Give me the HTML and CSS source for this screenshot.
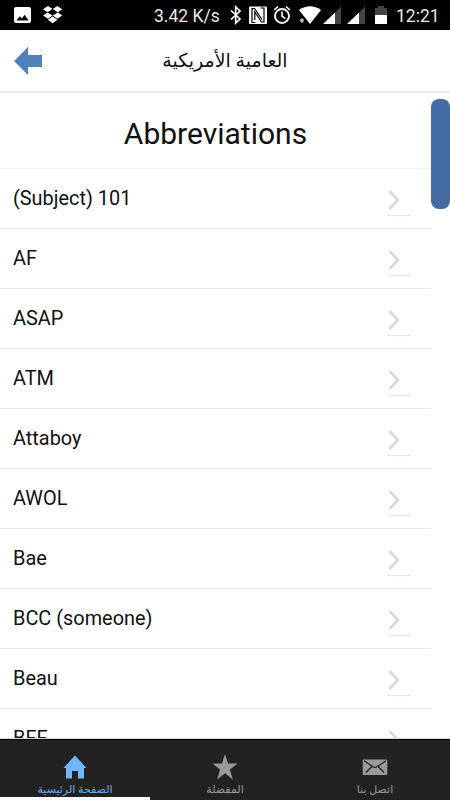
FILE: index.html
```html
<!DOCTYPE html>
<html lang="ar">
<head>
<meta charset="utf-8">
<title>العامية الأمريكية</title>
<link rel="stylesheet" href="styles.css">
</head>
<body>
<svg class="defs" width="0" height="0"><symbol id="chevron" viewBox="0 0 26 30"><path d="M2.5 3 11 12 2.5 21" fill="none" stroke="#d8d8d8" stroke-width="2.6"/><path d="M1 27.5H24" stroke="#e6e6e6" stroke-width="1.3"/></symbol></svg>
<div class="screen">
  <div class="status">
    <svg class="status-left" width="70" height="30" viewBox="0 0 70 30">
      <path fill="#fff" fill-rule="evenodd" d="M16 7H29Q31 7 31 9V21Q31 23 29 23H16Q14 23 14 21V9Q14 7 16 7ZM16.5 20.5H28.5L24.7 14.8 21.8 18.6 19.7 16.3Z"/>
      <path fill="#fff" d="M48 6 52.5 9 47.5 12.2 43 9.2ZM57.3 6 62.3 9.2 57.8 12.2 52.8 9ZM47.5 12.5 52.5 15.6 48 18.7 43 15.6ZM57.8 12.5 62.3 15.6 57.3 18.7 52.8 15.6ZM52.6 16.5 57.4 19.7 52.6 23.2 47.8 19.7Z"/>
    </svg>
    <span class="speed">3.42 K/s</span>
    <svg class="status-right" width="162" height="30" viewBox="228 0 162 30">
      <path d="M231 10.5 240 19 235.7 23V7L240 11 231 19.5" fill="none" stroke="#fff" stroke-width="1.7"/>
      <rect x="249" y="6.5" width="18" height="17.5" rx="1" fill="#fff"/>
      <path d="M255.5 22.5H252V8.5H254.5L262 19.5M260.5 8H264V22H261.5L254.8 12V20" fill="none" stroke="#000" stroke-width="1.2"/>
      <circle cx="282" cy="16" r="7" fill="none" stroke="#fff" stroke-width="1.9"/>
      <path d="M282 11.5V16.2L285.3 18.6M274 10 278 6.7M290 10 286 6.7" fill="none" stroke="#fff" stroke-width="1.6"/>
      <path d="M299 10Q310 2.5 321 10L310 24Z" fill="#fff"/>
      <path d="M302 18 304 20 303.2 22 301.8 23 300.4 21.5 300 19.5Z" fill="#bbb"/>
      <path d="M335 12.5V24H323Z" fill="#fff"/><path d="M335 12.5 341 6.5V24H335Z" fill="#444"/>
      <path d="M359 12.5V24H347Z" fill="#fff"/><path d="M359 12.5 365 6.5V24H359Z" fill="#444"/>
      <path d="M375 8H378V6H384V8H387V15H375Z" fill="#444"/><path d="M375 15H387V24H375Z" fill="#fff"/>
    </svg>
    <span class="clock">12:21</span>
  </div>
  <header class="bar">
    <svg class="back" width="28" height="28" viewBox="0 0 28 28"><path d="M0 14 14 0V8H28V20H14V28Z" fill="#4f81bd"/></svg>
    <h1 class="bar-title" dir="rtl">العامية الأمريكية</h1>
  </header>
  <main class="content">
    <div class="list">
      <h2 class="heading">Abbreviations</h2>
      <div class="row"><span>(Subject) 101</span><svg class="chev"><use href="#chevron"/></svg></div>
      <div class="row"><span>AF</span><svg class="chev"><use href="#chevron"/></svg></div>
      <div class="row"><span>ASAP</span><svg class="chev"><use href="#chevron"/></svg></div>
      <div class="row"><span>ATM</span><svg class="chev"><use href="#chevron"/></svg></div>
      <div class="row"><span>Attaboy</span><svg class="chev"><use href="#chevron"/></svg></div>
      <div class="row"><span>AWOL</span><svg class="chev"><use href="#chevron"/></svg></div>
      <div class="row"><span>Bae</span><svg class="chev"><use href="#chevron"/></svg></div>
      <div class="row"><span>BCC (someone)</span><svg class="chev"><use href="#chevron"/></svg></div>
      <div class="row"><span>Beau</span><svg class="chev"><use href="#chevron"/></svg></div>
      <div class="row"><span>BFF</span><svg class="chev"><use href="#chevron"/></svg></div>
    </div>
    <div class="thumb"></div>
  </main>
  <nav class="tabs">
    <div class="tab active">
      <svg width="26" height="26" viewBox="0 0 26 26"><path d="M13 1.5 24.5 14H22V24.5H16V17H10V24.5H4V14H1.5Z" fill="#72b6fb"/></svg>
      <span dir="rtl">الصفحة الرئيسية</span>
    </div>
    <div class="tab">
      <svg width="26" height="26" viewBox="0 0 26 26"><path d="M13 0 16 9.6H25.5L17.9 15.5 20.8 25.5 13 19.3 5.2 25.5 8.1 15.5.5 9.6H10Z" fill="#999"/></svg>
      <span dir="rtl">المفضلة</span>
    </div>
    <div class="tab">
      <svg width="26" height="26" viewBox="0 0 26 26"><rect x=".7" y="5.5" width="24.6" height="15.5" rx="1" fill="#999"/><path d="M2 6.8 11 12.7Q13 14 15 12.7L24 6.8M4 18.5 9.8 12.5M22 18.5 16.2 12.5" fill="none" stroke="#222" stroke-width="1.2"/></svg>
      <span dir="rtl">اتصل بنا</span>
    </div>
  </nav>
</div>
</body>
</html>
```
FILE: styles.css
```css
* { box-sizing: border-box; }
body { margin: 0; background: #fff; font-family: Roboto, "DejaVu Sans", sans-serif; color: #111; }
.defs { position: absolute; }
.screen { width: 450px; height: 800px; display: flex; flex-direction: column; overflow: hidden; }
.status { height: 30px; flex: none; background: #000; color: #e8e8e8; display: flex; align-items: center; font-size: 18px; line-height: 30px; white-space: nowrap; }
.status-left { flex: none; }
.speed { width: 74px; margin-left: 84px; padding-top: 2px; font-size: 17.5px; }
.status-right { flex: none; }
.clock { margin-left: 6px; padding-top: 2px; font-size: 17.5px; }
.bar { height: 63px; flex: none; display: grid; grid-template-columns: 42px 1fr 42px; align-items: center; border-bottom: 2px solid #ececec; }
.back { margin-left: 14px; }
.bar-title { margin: 0; font-size: 19px; font-weight: 400; text-align: center; white-space: nowrap; }
.content { flex: 1; min-height: 0; overflow: hidden; display: flex; border-bottom: 1px solid #ddd; }
.list { width: 431px; flex: none; }
.heading { margin: 0; height: 76px; padding-top: 6px; line-height: 70px; font-size: 30px; font-weight: 400; text-align: center; border-bottom: 1px solid #f0f0f0; }
.row { height: 60px; padding: 0 18px 0 13px; display: flex; align-items: center; justify-content: space-between; border-bottom: 1px solid #e9e9e9; font-size: 19.9px; }
.chev { width: 26px; height: 30px; margin-top: 9px; }
.thumb { width: 19px; height: 110px; margin-top: 6px; border-radius: 8px; background: #446ba2; }
.tabs { height: 61px; flex: none; display: flex; background: #222; border-top: 1px solid #000; }
.tab { flex: 1; display: flex; flex-direction: column; align-items: center; padding-top: 14px; color: #999; font-size: 11px; line-height: 20px; white-space: nowrap; border-bottom: 1px solid #222; }
.tab svg { flex: none; }
.active { color: #72a9e8; border-bottom: 3px solid #fff; }
```
